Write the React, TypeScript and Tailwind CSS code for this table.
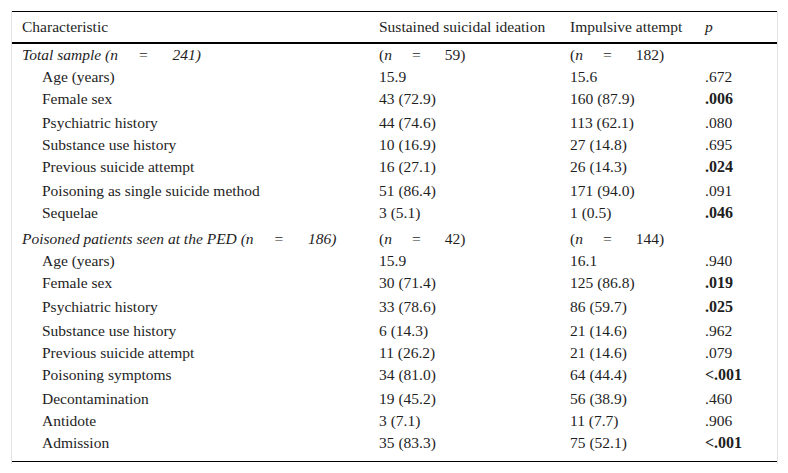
import React from "react";

type Row = {
  label: string;
  a: string;
  b: string;
  p?: string;
  bold?: boolean;
};

type Section = {
  title: string;
  n: string;
  na: string;
  nb: string;
  rows: Row[];
};

const sections: Section[] = [
  {
    title: "Total sample",
    n: "241",
    na: "59",
    nb: "182",
    rows: [
      { label: "Age (years)", a: "15.9", b: "15.6", p: ".672" },
      { label: "Female sex", a: "43 (72.9)", b: "160 (87.9)", p: ".006", bold: true },
      { label: "Psychiatric history", a: "44 (74.6)", b: "113 (62.1)", p: ".080" },
      { label: "Substance use history", a: "10 (16.9)", b: "27 (14.8)", p: ".695" },
      { label: "Previous suicide attempt", a: "16 (27.1)", b: "26 (14.3)", p: ".024", bold: true },
      { label: "Poisoning as single suicide method", a: "51 (86.4)", b: "171 (94.0)", p: ".091" },
      { label: "Sequelae", a: "3 (5.1)", b: "1 (0.5)", p: ".046", bold: true },
    ],
  },
  {
    title: "Poisoned patients seen at the PED",
    n: "186",
    na: "42",
    nb: "144",
    rows: [
      { label: "Age (years)", a: "15.9", b: "16.1", p: ".940" },
      { label: "Female sex", a: "30 (71.4)", b: "125 (86.8)", p: ".019", bold: true },
      { label: "Psychiatric history", a: "33 (78.6)", b: "86 (59.7)", p: ".025", bold: true },
      { label: "Substance use history", a: "6 (14.3)", b: "21 (14.6)", p: ".962" },
      { label: "Previous suicide attempt", a: "11 (26.2)", b: "21 (14.6)", p: ".079" },
      { label: "Poisoning symptoms", a: "34 (81.0)", b: "64 (44.4)", p: "<.001", bold: true },
      { label: "Decontamination", a: "19 (45.2)", b: "56 (38.9)", p: ".460" },
      { label: "Antidote", a: "3 (7.1)", b: "11 (7.7)", p: ".906" },
      { label: "Admission", a: "35 (83.3)", b: "75 (52.1)", p: "<.001", bold: true },
    ],
  },
];

const cols = "grid grid-cols-[357px_191px_135px_1fr] items-center";

// "(n = 59)" as typeset in the source, with the wide gaps round the equals sign
function NCount({ value }: { value: string }) {
  return (
    <span>
      (<i>n</i>
      <span className="inline-block w-[20px]" />=
      <span className="inline-block w-[24px]" />
      {value})
    </span>
  );
}

export default function App() {
  return (
    <div className="min-h-[473px] bg-white pt-[11px] font-['Liberation_Serif','Times_New_Roman',serif] text-[15.5px] leading-[18px] text-[#1e1e1e]">
      <div className="ml-[11px] w-[767px] border-x border-[#e3e3e3] pb-[2px]">
        <div className={`${cols} h-[33px] border-t border-b-2 border-black`}>
          <div className="pl-[10px]">Characteristic</div>
          <div className="pl-[10px]">Sustained suicidal ideation</div>
          <div className="pl-[10px]">Impulsive attempt</div>
          <div className="pl-[10px] italic">p</div>
        </div>
        <div className="border-b border-black">
          {sections.map((s, si) => (
            <React.Fragment key={s.title}>
              <div className={`${cols} ${si === 0 ? "h-[22px]" : "h-[24px] pt-[2px]"}`}>
                <div className="pl-[10px] italic">
                  {s.title} <NCount value={s.n} />
                </div>
                <div className="pl-[10px]">
                  <NCount value={s.na} />
                </div>
                <div className="pl-[10px]">
                  <NCount value={s.nb} />
                </div>
                <div />
              </div>
              {s.rows.map((r, ri) => {
                const last = si === sections.length - 1 && ri === s.rows.length - 1;
                const h = last ? "h-[29px] pb-[7px]" : r.bold ? "h-[24px] pb-[2px]" : "h-[22px]";
                return (
                  <div key={r.label} className={`${cols} ${h}`}>
                    <div className="pl-[30px]">{r.label}</div>
                    <div className="pl-[10px]">{r.a}</div>
                    <div className="pl-[10px]">{r.b}</div>
                    <div className={r.bold ? "pl-[10px] text-[16px] font-bold" : "pl-[10px]"}>{r.p}</div>
                  </div>
                );
              })}
            </React.Fragment>
          ))}
        </div>
      </div>
    </div>
  );
}
